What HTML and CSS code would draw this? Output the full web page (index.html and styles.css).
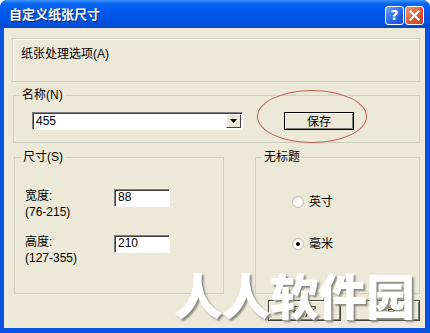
FILE: index.html
```html
<!DOCTYPE html>
<html lang="zh-CN">
<head>
    <meta charset="UTF-8">
    <title>自定义纸张尺寸</title>
    <link rel="stylesheet" href="styles.css">
</head>
<body>

<div class="window">
    <div class="titlebar">
        <span class="title">自定义纸张尺寸</span>
        <div class="title-btns">
            <span class="tbtn help">?</span>
            <span class="tbtn close">
                <svg width="11" height="11" viewBox="0 0 11 11"><path d="M1.5 1.5 L9.5 9.5 M9.5 1.5 L1.5 9.5" stroke="#fff" stroke-width="2.2" stroke-linecap="square"/></svg>
            </span>
        </div>
    </div>

    <div class="client">
        <div class="box">纸张处理选项(A)</div>

        <fieldset class="group">
            <legend>名称(N)</legend>
            <div class="name-row">
                <div class="combo">
                    <span class="combo-text">455</span>
                    <span class="combo-arrow">
                        <svg width="7" height="4" viewBox="0 0 7 4"><path d="M0 0 H7 L3.5 4 Z" fill="#000"/></svg>
                    </span>
                </div>
                <button class="btn default">保存</button>
            </div>
        </fieldset>

        <div class="cols">
            <fieldset class="group size-group">
                <legend>尺寸(S)</legend>
                <div class="size-body">
                    <div class="size-row">
                        <div class="size-label">宽度:<br>(76-215)</div>
                        <div class="field">88</div>
                    </div>
                    <div class="size-row">
                        <div class="size-label">高度:<br>(127-355)</div>
                        <div class="field">210</div>
                    </div>
                </div>
            </fieldset>

            <fieldset class="group unit-group">
                <legend>无标题</legend>
                <div class="unit-body">
                    <div class="radio-row"><span class="radio"></span>英寸</div>
                    <div class="radio-row"><span class="radio checked"></span>毫米</div>
                </div>
            </fieldset>
        </div>

        <div class="actions">
            <button class="btn">确定</button>
            <button class="btn">取消</button>
        </div>
    </div>

    <div class="watermark">人人软件园</div>
    <div class="mark-circle"></div>
</div>

</body>
</html>
```

FILE: styles.css
```css
body {
    margin: 0;
    padding: 0;
    background: #ffffff;
    font-family: "Liberation Sans", "Noto Sans CJK SC", sans-serif;
    font-size: 12px;
    color: #000;
}
.window {
    position: relative;
    width: 430px;
    height: 333px;
    box-sizing: border-box;
    background: #0a53e0;
    border-radius: 7px 7px 0 0;
    padding: 0 5px 5px 4px;
    overflow: hidden;
}
.titlebar {
    height: 28px;
    margin: 0 -5px 0 -4px;
    padding: 0 6px 0 9px;
    display: flex;
    align-items: center;
    justify-content: space-between;
    border-radius: 7px 7px 0 0;
    background: linear-gradient(#3d95ff 0%, #0a66f0 12%, #0058ee 40%, #0054e3 70%, #0048d0 100%);
}
.title {
    color: #fff;
    font-family: "Noto Sans CJK SC", sans-serif;
    font-weight: bold;
    font-size: 13px;
    text-shadow: 1px 1px 0 #0a2a80;
    padding-bottom: 1px;
}
.title-btns {
    display: flex;
    gap: 1px;
    padding-top: 2px;
}
.tbtn {
    width: 19px;
    height: 19px;
    box-sizing: border-box;
    border: 1px solid #fff;
    border-radius: 3px;
    display: flex;
    align-items: center;
    justify-content: center;
}
.help {
    background: linear-gradient(135deg, #6ea3ff, #2663e8 60%, #1a4fcc);
    color: #fff;
    font-family: "DejaVu Sans", sans-serif;
    font-weight: bold;
    font-size: 14px;
}
.close {
    background: linear-gradient(135deg, #f39a7c, #e05a34 55%, #c53f1c);
}
.client {
    height: 300px;
    background: #ece9d8;
    padding: 10px 5px 0 9px;
    box-sizing: border-box;
}
.box {
    margin-left: -1px;
    height: 44px;
    box-sizing: border-box;
    border: 1px solid #d0d0bf;
    box-shadow: inset 1px 1px 0 #fff;
    padding: 8px 0 0 8px;
    line-height: 14px;
    margin-bottom: 6px;
}
.group {
    margin: 0;
    padding: 0;
    border: 1px solid #d0d0bf;
    min-width: 0;
}
.group legend {
    padding: 0 2px;
    margin-left: 6px;
    line-height: 14px;
}
.name-row {
    display: flex;
    align-items: center;
    padding: 10px 0 12px 18px;
}
.combo {
    width: 211px;
    height: 18px;
    box-sizing: border-box;
    background: #fff;
    border-top: 1px solid #808080;
    border-left: 1px solid #808080;
    border-right: 1px solid #fff;
    border-bottom: 1px solid #fff;
    box-shadow: inset 1px 1px 0 #404040;
    display: flex;
    align-items: center;
    justify-content: space-between;
    padding: 0 1px 0 3px;
}
.combo-arrow {
    width: 15px;
    height: 14px;
    box-sizing: border-box;
    background: #ece9d8;
    border-top: 1px solid #fff;
    border-left: 1px solid #fff;
    border-right: 1px solid #404040;
    border-bottom: 1px solid #404040;
    display: flex;
    align-items: center;
    justify-content: center;
}
.btn {
    font-family: "Noto Sans CJK SC", sans-serif;
    font-size: 12px;
    background: #ece9d8;
    border: 1px solid #404040;
    box-shadow: inset 1px 1px 0 #fff, inset -1px -1px 0 #808080;
    padding: 0;
    height: 21px;
    width: 73px;
    line-height: 14px;
}
.btn.default {
    margin-left: 41px;
    width: 70px;
    height: 18px;
    border-color: #000;
}
.cols {
    display: flex;
    justify-content: space-between;
    margin: 7px 0 0 1px;
}
.size-group,
.unit-group {
    height: 144px;
    box-sizing: border-box;
}
.size-group {
    width: 210px;
}
.unit-group {
    width: 165px;
}
.size-body {
    padding: 24px 0 0 10px;
}
.unit-body {
    padding: 30px 0 0 36px;
}
.size-row {
    display: flex;
    align-items: flex-start;
    margin-bottom: 14px;
    line-height: 16px;
}
.size-label {
    width: 89px;
}
.field {
    width: 56px;
    height: 18px;
    margin-top: 1px;
    box-sizing: border-box;
    background: #fff;
    border-top: 1px solid #808080;
    border-left: 1px solid #808080;
    border-right: 1px solid #fff;
    border-bottom: 1px solid #fff;
    box-shadow: inset 1px 1px 0 #404040;
    padding-left: 3px;
    line-height: 15px;
}
.radio-row {
    display: flex;
    align-items: center;
    gap: 5px;
    line-height: 16px;
    margin-bottom: 26px;
}
.radio {
    width: 12px;
    height: 12px;
    border-radius: 50%;
    box-sizing: border-box;
    border: 1px solid #c4c1b0;
    background: radial-gradient(circle at 65% 65%, #ffffff 30%, #e6e3d4 100%);
    display: flex;
    align-items: center;
    justify-content: center;
}
.radio.checked::after {
    content: "";
    width: 4px;
    height: 4px;
    border-radius: 50%;
    background: #000;
}
.actions {
    display: flex;
    justify-content: flex-end;
    gap: 6px;
    margin-top: 6px;
}
.watermark {
    position: absolute;
    left: 174px;
    top: 262px;
    color: #fff;
    font-family: "Noto Sans CJK SC", sans-serif;
    font-weight: 900;
    font-size: 49px;
    line-height: 64px;
    letter-spacing: -1px;
    text-shadow: 2px 2px 2px #8a8a80;
}
.mark-circle {
    position: absolute;
    left: 257px;
    top: 90px;
    width: 110px;
    height: 53px;
    box-sizing: border-box;
    border: 1px solid #c8605a;
    border-radius: 50%;
}
```
